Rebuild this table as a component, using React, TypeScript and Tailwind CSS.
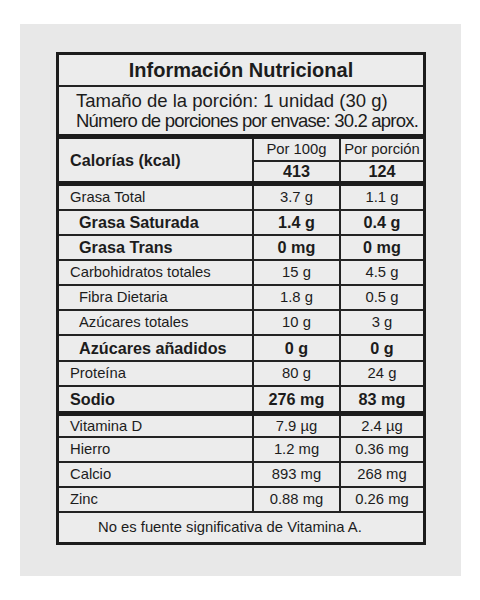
const font = { fontFamily: '"Liberation Sans", Arial, sans-serif' };

type Row = {
  label: string;
  a: string;
  b: string;
  bold?: boolean;
  indent?: boolean;
  h: string;
  line?: boolean;
};

const macros: Row[] = [
  { label: 'Grasa Total', a: '3.7 g', b: '1.1 g', h: 'h-[23px]', line: true },
  { label: 'Grasa Saturada', a: '1.4 g', b: '0.4 g', bold: true, indent: true, h: 'h-[23px]', line: true },
  { label: 'Grasa Trans', a: '0 mg', b: '0 mg', bold: true, indent: true, h: 'h-[23px]', line: true },
  { label: 'Carbohidratos totales', a: '15 g', b: '4.5 g', h: 'h-[23px]', line: true },
  { label: 'Fibra Dietaria', a: '1.8 g', b: '0.5 g', indent: true, h: 'h-[23px]', line: true },
  { label: 'Azúcares totales', a: '10 g', b: '3 g', indent: true, h: 'h-[23px]', line: true },
  { label: 'Azúcares añadidos', a: '0 g', b: '0 g', bold: true, indent: true, h: 'h-[24px]', line: true },
  { label: 'Proteína', a: '80 g', b: '24 g', h: 'h-[23px]', line: true },
  { label: 'Sodio', a: '276 mg', b: '83 mg', bold: true, h: 'h-[24px]' },
];

const minerals: Row[] = [
  { label: 'Vitamina D', a: '7.9 µg', b: '2.4 µg', h: 'h-[20px]', line: true },
  { label: 'Hierro', a: '1.2 mg', b: '0.36 mg', h: 'h-[23px]', line: true },
  { label: 'Calcio', a: '893 mg', b: '268 mg', h: 'h-[23px]', line: true },
  { label: 'Zinc', a: '0.88 mg', b: '0.26 mg', h: 'h-[23px]', line: true },
];

function NutriRow({ r }: { r: Row }) {
  const txt = r.bold ? 'text-[16.2px] font-bold' : 'text-[14.8px]';
  return (
    <div className={`flex box-content ${r.h} ${r.line ? 'border-b-2 border-[#232323]' : ''}`}>
      <div className={`w-[193px] flex items-center ${r.indent ? 'pl-[20px]' : 'pl-[11px]'} ${txt}`}>{r.label}</div>
      <div className={`w-[87px] flex items-center justify-center border-l-2 border-[#232323] ${txt}`}>{r.a}</div>
      <div className={`flex-1 flex items-center justify-center border-l-2 border-[#232323] ${txt}`}>{r.b}</div>
    </div>
  );
}

export default function App() {
  return (
    <div className="w-[480px] h-[600px] bg-white pt-[24px] pl-[20px]" style={font}>
      <div className="w-[441px] h-[552px] bg-[#e8e8e8] pt-[28px] pl-[36px]">
        <div className="w-[370px] border-[3px] border-[#1c1c1c] bg-[#ececec] text-[#1c1c1c] leading-none">
          <div className="h-[30px] flex items-center justify-center border-b-2 border-[#232323] box-content text-[20px] font-bold">
            Información Nutricional
          </div>
          <div className="h-[47px] flex flex-col justify-center pl-[17px] text-[18.5px] leading-[20px]">
            <div>Tamaño de la porción: 1 unidad (30 g)</div>
            <div className="tracking-[-0.8px]">Número de porciones por envase: 30.2 aprox.</div>
          </div>
          <div className="h-[5px] bg-[#1c1c1c]" />
          <div className="flex h-[42px]">
            <div className="w-[193px] flex items-center pl-[11px] text-[16.2px] font-bold">Calorías (kcal)</div>
            <div className="w-[87px] flex flex-col border-l-2 border-[#232323]">
              <div className="h-[21px] flex items-center justify-center text-[14.8px] border-b-2 border-[#232323] box-content">Por 100g</div>
              <div className="flex-1 flex items-center justify-center text-[16.2px] font-bold">413</div>
            </div>
            <div className="flex-1 flex flex-col border-l-2 border-[#232323]">
              <div className="h-[21px] flex items-center justify-center text-[14.8px] border-b-2 border-[#232323] box-content">Por porción</div>
              <div className="flex-1 flex items-center justify-center text-[16.2px] font-bold">124</div>
            </div>
          </div>
          <div className="h-[5px] bg-[#1c1c1c]" />
          {macros.map((r) => (
            <NutriRow key={r.label} r={r} />
          ))}
          <div className="h-[5px] bg-[#1c1c1c]" />
          {minerals.map((r) => (
            <NutriRow key={r.label} r={r} />
          ))}
          <div className="h-[29px] flex items-center pl-[39px] text-[14.8px]">
            No es fuente significativa de Vitamina A.
          </div>
        </div>
      </div>
    </div>
  );
}
